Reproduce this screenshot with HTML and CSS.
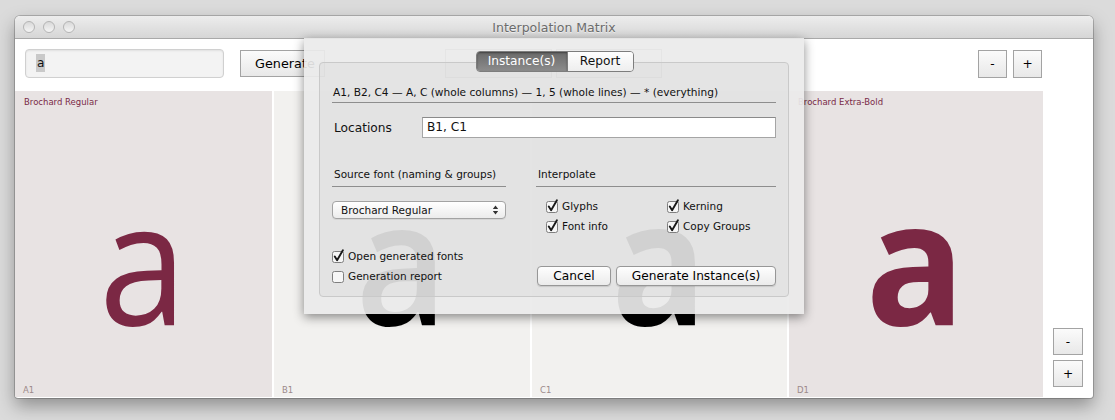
FILE: index.html
```html
<!DOCTYPE html>
<html>
<head>
<meta charset="utf-8">
<title>Interpolation Matrix</title>
<link rel="stylesheet" href="styles.css">
</head>
<body>
<div class="desktop">
  <div class="window">
    <div class="titlebar">
      <div class="lights"><span></span><span></span><span></span></div>
      <div class="title">Interpolation Matrix</div>
      <div></div>
    </div>
    <div class="content">
      <div class="main">
        <div class="toolbar">
          <div class="search"><span class="sel">a</span></div>
          <button class="btn sq gen">Generate</button>
          <button class="btn sq ghost1"></button>
          <button class="btn sq ghost2"></button>
          <div class="spacer"></div>
          <button class="btn sq pm">-</button>
          <button class="btn sq pm pm-gap">+</button>
        </div>
        <div class="matrix">
          <div class="cell master">
            <div class="cell-name">Brochard Regular</div>
            <div class="glyph light">a</div>
            <div class="cell-id">A1</div>
          </div>
          <div class="cell instance">
            <div class="cell-name"></div>
            <div class="glyph mid1">a</div>
            <div class="cell-id">B1</div>
          </div>
          <div class="cell instance">
            <div class="cell-name"></div>
            <div class="glyph mid2">a</div>
            <div class="cell-id">C1</div>
          </div>
          <div class="cell master">
            <div class="cell-name">Brochard Extra-Bold</div>
            <div class="glyph heavy">a</div>
            <div class="cell-id">D1</div>
          </div>
        </div>
      </div>
      <div class="side">
        <button class="btn sq pm2">-</button>
        <button class="btn sq pm2">+</button>
      </div>
    </div>

    <div class="sheet">
      <div class="tabs">
        <div class="tab on">Instance(s)</div>
        <div class="tab">Report</div>
      </div>
      <div class="group">
        <div class="hint">A1, B2, C4 — A, C (whole columns) — 1, 5 (whole lines) — * (everything)</div>
        <div class="loc">
          <label>Locations</label>
          <div class="field">B1, C1</div>
        </div>
        <div class="sections">
          <div class="col">
            <div class="head">Source font (naming &amp; groups)</div>
            <div class="popup">
              <span>Brochard Regular</span>
              <svg width="7" height="10" viewBox="0 0 7 10"><path d="M3.5 0.5 L6.2 4 L0.8 4 Z M3.5 9.5 L6.2 6 L0.8 6 Z" fill="#333"/></svg>
            </div>
            <div class="left-checks">
              <div class="check">
                <svg width="13" height="14" viewBox="0 0 13 14"><rect x="0.5" y="2.5" width="11" height="11" rx="2" fill="#f6f6f6" stroke="#7f7f7f"/><path d="M2.8 7.6 L5.1 11.2 L10.9 1.2" fill="none" stroke="#1a1a1a" stroke-width="1.9" stroke-linecap="round" stroke-linejoin="round"/></svg>
                <span>Open generated fonts</span>
              </div>
              <div class="check">
                <svg width="13" height="14" viewBox="0 0 13 14"><rect x="0.5" y="2.5" width="11" height="11" rx="2" fill="#f6f6f6" stroke="#7f7f7f"/></svg>
                <span>Generation report</span>
              </div>
            </div>
          </div>
          <div class="col">
            <div class="head">Interpolate</div>
            <div class="right-checks">
              <div class="check">
                <svg width="13" height="14" viewBox="0 0 13 14"><rect x="0.5" y="2.5" width="11" height="11" rx="2" fill="#f6f6f6" stroke="#7f7f7f"/><path d="M2.8 7.6 L5.1 11.2 L10.9 1.2" fill="none" stroke="#1a1a1a" stroke-width="1.9" stroke-linecap="round" stroke-linejoin="round"/></svg>
                <span>Glyphs</span>
              </div>
              <div class="check">
                <svg width="13" height="14" viewBox="0 0 13 14"><rect x="0.5" y="2.5" width="11" height="11" rx="2" fill="#f6f6f6" stroke="#7f7f7f"/><path d="M2.8 7.6 L5.1 11.2 L10.9 1.2" fill="none" stroke="#1a1a1a" stroke-width="1.9" stroke-linecap="round" stroke-linejoin="round"/></svg>
                <span>Kerning</span>
              </div>
              <div class="check">
                <svg width="13" height="14" viewBox="0 0 13 14"><rect x="0.5" y="2.5" width="11" height="11" rx="2" fill="#f6f6f6" stroke="#7f7f7f"/><path d="M2.8 7.6 L5.1 11.2 L10.9 1.2" fill="none" stroke="#1a1a1a" stroke-width="1.9" stroke-linecap="round" stroke-linejoin="round"/></svg>
                <span>Font info</span>
              </div>
              <div class="check">
                <svg width="13" height="14" viewBox="0 0 13 14"><rect x="0.5" y="2.5" width="11" height="11" rx="2" fill="#f6f6f6" stroke="#7f7f7f"/><path d="M2.8 7.6 L5.1 11.2 L10.9 1.2" fill="none" stroke="#1a1a1a" stroke-width="1.9" stroke-linecap="round" stroke-linejoin="round"/></svg>
                <span>Copy Groups</span>
              </div>
            </div>
            <div class="actions">
              <button class="push cancel">Cancel</button>
              <button class="push go">Generate Instance(s)</button>
            </div>
          </div>
        </div>
      </div>
    </div>
  </div>
</div>
</body>
</html>
```

FILE: styles.css
```css
html, body {
  margin: 0;
  padding: 0;
}
body {
  background: #dbdbdb;
  font-family: "DejaVu Sans", "Lucida Grande", sans-serif;
  color: #111;
  width: 1115px;
  height: 420px;
  overflow: hidden;
}
.desktop {
  padding: 16px 0 0 15px;
}
.window {
  position: relative;
  width: 1078px;
  height: 382px;
  background: #fff;
  border-radius: 5px 5px 3px 3px;
  box-shadow: 0 0 0 1px rgba(0,0,0,0.2), 0 8px 18px rgba(0,0,0,0.35);
  display: flex;
  flex-direction: column;
  overflow: hidden;
}
.titlebar {
  height: 22px;
  flex: none;
  border-bottom: 1px solid #a9a9a9;
  background: linear-gradient(#ededed, #d6d6d6);
  display: grid;
  grid-template-columns: 1fr auto 1fr;
  align-items: center;
}
.lights {
  display: flex;
  gap: 8px;
  padding-left: 8px;
}
.lights span {
  width: 12px;
  height: 12px;
  box-sizing: border-box;
  border-radius: 50%;
  border: 1px solid #b4b4b4;
  background: linear-gradient(#d9d9d9, #f5f5f5);
}
.title {
  font-size: 12.5px;
  color: #6b6b6b;
  text-shadow: 0 1px 0 rgba(255,255,255,0.6);
}
.content {
  flex: 1;
  display: flex;
}
.main {
  width: 1028px;
  display: flex;
  flex-direction: column;
}
.toolbar {
  height: 52px;
  box-sizing: border-box;
  padding: 10px 1px 0 10px;
  display: flex;
  align-items: flex-start;
}
.search {
  width: 199px;
  height: 29px;
  box-sizing: border-box;
  border: 1px solid #d0d0d0;
  border-radius: 4px;
  background: #f3f3f3;
  box-shadow: inset 0 1px 2px rgba(0,0,0,0.08);
  padding-left: 10px;
  font-size: 12.2px;
  line-height: 27px;
}
.sel {
  background: #c9c9c9;
  padding: 2px 1px;
}
.btn {
  font-family: "DejaVu Sans", "Lucida Grande", sans-serif;
  font-size: 12.2px;
  color: #000;
  padding: 0;
}
.sq {
  border: 1px solid #a3a3a3;
  background: linear-gradient(#fbfbfb, #e8e8e8);
  box-sizing: border-box;
}
.gen {
  margin: 1px 0 0 16px;
  width: 85px;
  height: 27px;
  text-align: left;
  padding-left: 14px;
  font-size: 12.8px;
}
.ghost1 {
  margin: 0 0 0 120px;
  width: 107px;
  height: 29px;
}
.ghost2 {
  margin: 0 0 0 4px;
  width: 106px;
  height: 29px;
}
.spacer {
  flex: 1;
}
.pm {
  width: 29px;
  height: 28px;
  margin-top: 1px;
}
.pm-gap {
  margin-left: 6px;
}
.matrix {
  flex: 1;
  display: grid;
  grid-template-columns: 257px 256px 255px 254px;
  column-gap: 2px;
  margin-bottom: 1px;
}
.cell {
  display: flex;
  flex-direction: column;
  padding: 6px 9px 1px 8px;
  overflow: hidden;
}
.master {
  background: #e8e3e3;
}
.instance {
  background: #f2f1ef;
}
.cell-name {
  font-size: 8.5px;
  line-height: 11px;
  height: 11px;
  color: #7a2a47;
  white-space: nowrap;
  padding-left: 1px;
}
.cell-id {
  margin-top: auto;
  font-size: 8.5px;
  line-height: 11px;
  color: #9c8a8a;
}
.glyph {
  font-family: "Open Sans", sans-serif;
  font-size: 172px;
  line-height: 172px;
  height: 172px;
  margin-top: 64px;
  text-align: center;
}
.light {
  color: #7b2844;
  font-weight: 400;
  transform: scaleX(0.92);
}
.mid1 {
  color: #000;
  font-weight: 600;
  transform: scaleX(0.92);
}
.mid2 {
  color: #000;
  font-weight: 700;
  transform: scaleX(0.92);
}
.heavy {
  color: #7b2844;
  font-weight: 700;
  transform: scaleX(0.96);
}
.side {
  width: 50px;
  box-sizing: border-box;
  display: flex;
  flex-direction: column;
  justify-content: flex-end;
  align-items: flex-start;
  gap: 5px;
  padding: 0 0 11px 10px;
}
.pm2 {
  width: 30px;
  height: 27px;
}

/* sheet */
.sheet {
  position: absolute;
  left: 289px;
  top: 22px;
  width: 500px;
  height: 276px;
  box-sizing: border-box;
  background: rgba(234,234,234,0.92);
  box-shadow: 0 3px 10px rgba(0,0,0,0.45);
  padding-top: 13px;
  display: flex;
  flex-direction: column;
}
.tabs {
  align-self: center;
  display: flex;
  position: relative;
  z-index: 1;
  height: 21px;
  box-sizing: border-box;
  border: 1px solid #7d7d7d;
  border-radius: 4px;
  overflow: hidden;
  margin-left: 1px;
}
.tab {
  width: 65px;
  font-size: 12.2px;
  line-height: 19px;
  text-align: center;
  background: linear-gradient(#fefefe, #eeeeee);
  border-left: 1px solid #7d7d7d;
}
.tab.on {
  width: 90px;
  border-left: 0;
  color: #fff;
  background: linear-gradient(#6a6a6a, #8c8c8c);
  box-shadow: inset 0 1px 2px rgba(0,0,0,0.4);
}
.group {
  margin: -10px 15px 0;
  border: 1px solid #c9c9c9;
  border-radius: 4px;
  background: rgba(0,0,0,0.03);
  padding: 22px 12px 10px;
}
.hint {
  font-size: 10.6px;
  line-height: 14px;
  padding: 0 0 3px 1px;
  border-bottom: 1px solid #8e8e8e;
  white-space: nowrap;
}
.loc {
  display: flex;
  align-items: center;
  margin-top: 14px;
  height: 21px;
}
.loc label {
  width: 88px;
  padding-left: 2px;
  font-size: 12.2px;
}
.field {
  flex: 1;
  height: 21px;
  box-sizing: border-box;
  border: 1px solid #a5a5a5;
  border-top-color: #8a8a8a;
  background: #fff;
  font-size: 12.2px;
  line-height: 19px;
  padding-left: 4px;
}
.sections {
  display: grid;
  grid-template-columns: 174px 240px;
  column-gap: 30px;
  margin-top: 29px;
}
.head {
  font-size: 10.5px;
  line-height: 14px;
  padding: 0 0 5px 2px;
  border-bottom: 1px solid #8e8e8e;
}
.popup {
  margin-top: 14px;
  height: 18px;
  box-sizing: border-box;
  border: 1px solid #a3a3a3;
  border-radius: 4px;
  background: linear-gradient(#ffffff, #ececec);
  box-shadow: 0 1px 0 rgba(0,0,0,0.06);
  display: flex;
  align-items: center;
  justify-content: space-between;
  padding: 0 6px 0 8px;
  font-size: 10.5px;
}
.left-checks {
  margin-top: 27px;
}
.check {
  display: flex;
  align-items: center;
  gap: 3px;
  height: 20px;
  font-size: 10.5px;
}
.check svg {
  flex: none;
}
.right-checks {
  margin-top: 9px;
  display: grid;
  grid-template-columns: 121px auto;
  padding-left: 10px;
}
.actions {
  display: flex;
  gap: 5px;
  margin-top: 30px;
  padding-left: 1px;
}
.push {
  height: 20px;
  box-sizing: border-box;
  border: 1px solid #979797;
  border-radius: 4px;
  background: linear-gradient(#fefefe, #ebebeb);
  box-shadow: 0 1px 1px rgba(0,0,0,0.12);
  font-family: "DejaVu Sans", "Lucida Grande", sans-serif;
  font-size: 12.2px;
  color: #000;
  padding: 0;
}
.cancel {
  width: 74px;
}
.go {
  width: 160px;
}
```
